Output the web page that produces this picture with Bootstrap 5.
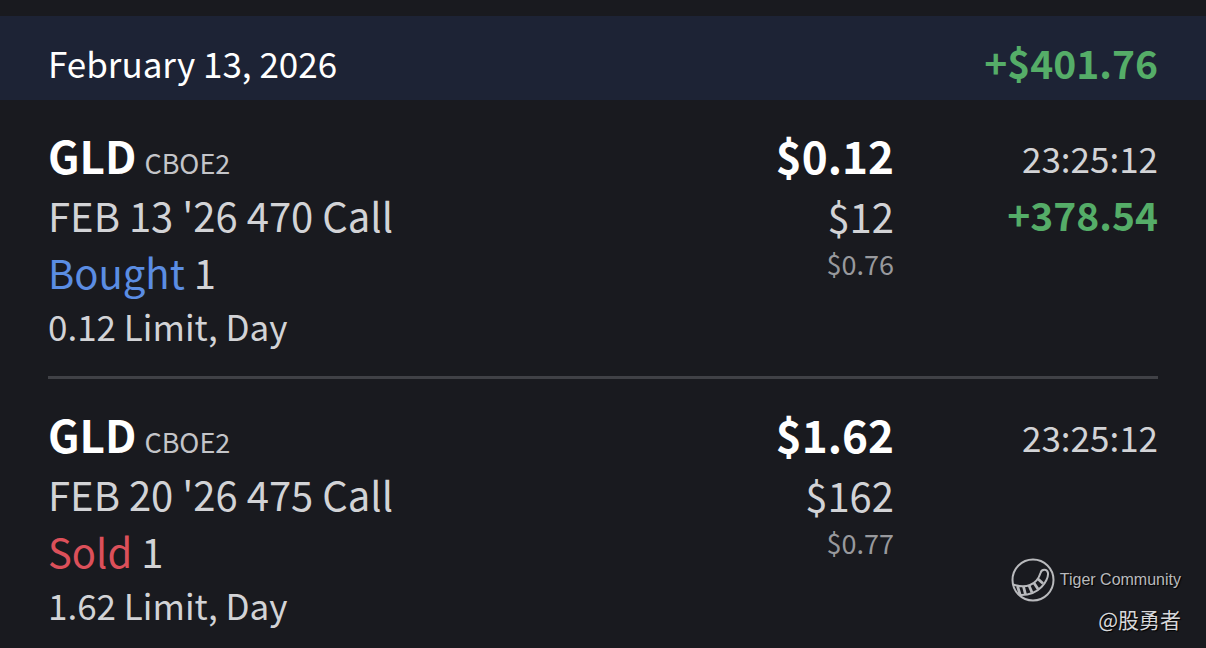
<!DOCTYPE html>
<html lang="en">
<head>
<meta charset="utf-8">
<meta name="viewport" content="width=device-width, initial-scale=1">
<title>Trades</title>
<link href="https://cdn.jsdelivr.net/npm/bootstrap@5.3.0/dist/css/bootstrap.min.css" rel="stylesheet">
<style>
  body { background: #191a1f; color: #d2d3d6; font-family: "Noto Sans CJK SC", "Noto Sans", sans-serif; font-size: 40px; line-height: 57px; }
  .gutter { padding-left: 48px; padding-right: 48px; }
  .day-bar { background: #1d2335; color: #fff; min-height: 84px; padding-top: 8px; }
  .fs-date, .fs-detail { font-size: 35px; }
  .gain { color: #55ad68; font-size: 39px; font-weight: 600; }
  .trade { display: grid; grid-template-columns: minmax(0, 1fr) auto 264px; padding: 24px 0 26px; }
  .trade + .trade { border-top: 3px solid #404146; }
  .headline { font-size: 44px; line-height: 63px; font-weight: 600; color: #fff; }
  .venue { font-size: 27px; line-height: 30px; font-weight: 400; color: #c4c5c9; }
  .fs-detail { line-height: 49px; }
  .amount { line-height: 58px; }
  .stamp { font-size: 35px; line-height: 68px; }
  .stamp + .gain { line-height: 45px; }
  .fee { font-size: 27px; line-height: 38px; color: #98999d; }
  .side-buy { color: #5b8de3; }
  .side-sell { color: #dc505a; }
  .watermark { right: 25px; bottom: 20px; color: #b9babd; text-shadow: 1px 1px 1px #000; }
  .brand { font: 16px/24px "Liberation Sans", sans-serif; }
  .author { font-size: 21px; line-height: 32px; color: #d8d8da; }
</style>
</head>
<body class="overflow-hidden">
<main class="position-relative pt-3">
  <header class="day-bar gutter d-flex justify-content-between align-items-center">
    <span class="fs-date">February 13, 2026</span>
    <span class="gain">+$401.76</span>
  </header>
  <section class="gutter">
    <article class="trade">
      <div>
        <div class="headline d-flex align-items-baseline gap-2">GLD <span class="venue">CBOE2</span></div>
        <div>FEB 13 '26 470 Call</div>
        <div><span class="side-buy">Bought</span> 1</div>
        <div class="fs-detail">0.12 Limit, Day</div>
      </div>
      <div class="text-end">
        <div class="headline">$0.12</div>
        <div class="amount">$12</div>
        <div class="fee">$0.76</div>
      </div>
      <div class="text-end">
        <div class="stamp">23:25:12</div>
        <div class="gain">+378.54</div>
      </div>
    </article>
    <article class="trade">
      <div>
        <div class="headline d-flex align-items-baseline gap-2">GLD <span class="venue">CBOE2</span></div>
        <div>FEB 20 '26 475 Call</div>
        <div><span class="side-sell">Sold</span> 1</div>
        <div class="fs-detail">1.62 Limit, Day</div>
      </div>
      <div class="text-end">
        <div class="headline">$1.62</div>
        <div class="amount">$162</div>
        <div class="fee">$0.77</div>
      </div>
      <div class="text-end">
        <div class="stamp">23:25:12</div>
      </div>
    </article>
  </section>
  <aside class="watermark position-absolute text-end">
    <div class="d-flex align-items-center justify-content-end gap-1">
      <svg width="46" height="46" viewBox="0 0 46 46" fill="none" stroke="#b9babd" stroke-width="2" aria-hidden="true">
        <circle cx="23" cy="23" r="20.5"/>
        <path d="M3 27.500C9 29.500 15 30 20 28C26 25.500 29 21 30.500 16C31.500 12 37 11.500 38 16C38.500 20 35.500 26 31.500 30C26 35.500 18 38.500 9.500 38"/>
        <path stroke-width="2.800" d="M7.500 29L10 37.500M13.500 29.500L15.500 37.500M19 28.500L22 35.500M24 26L28 32M27.500 21.500L33 26.500"/>
      </svg>
      <span class="brand">Tiger Community</span>
    </div>
    <div class="author">@股勇者</div>
  </aside>
</main>
<script src="https://cdn.jsdelivr.net/npm/bootstrap@5.3.0/dist/js/bootstrap.bundle.min.js"></script>
</body>
</html>
